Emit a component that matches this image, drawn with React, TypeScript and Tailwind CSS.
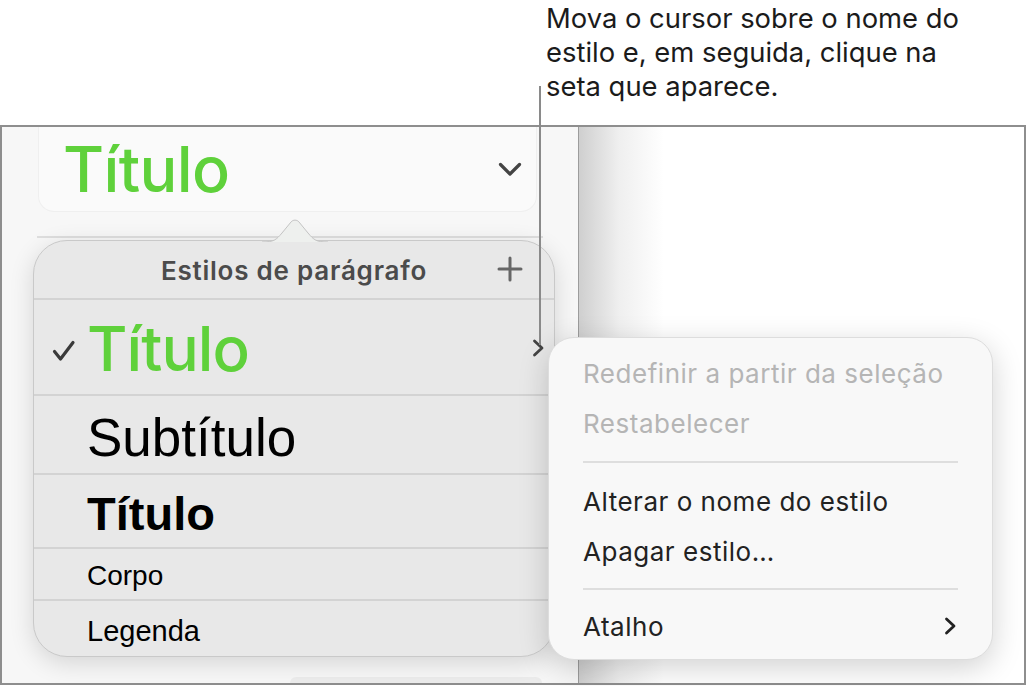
import React from 'react';

const GREEN = '#5fd13b';

function ChevronDown() {
    return (
        <svg width="24" height="15" viewBox="0 0 24 15" fill="none">
            <path d="M2.5 2.5 L12 12 L21.5 2.5" stroke="#444" strokeWidth="3.2" strokeLinecap="round" strokeLinejoin="round" />
        </svg>
    );
}

function ChevronRight({ color = '#444', w = 12, h = 18 }: { color?: string; w?: number; h?: number }) {
    return (
        <svg width={w} height={h} viewBox="0 0 12 18" fill="none">
            <path d="M2.5 2 L10 9 L2.5 16" stroke={color} strokeWidth="2.8" strokeLinecap="round" strokeLinejoin="round" />
        </svg>
    );
}

function Check() {
    return (
        <svg width="24" height="22" viewBox="0 0 24 22" fill="none">
            <path d="M2.5 11.5 L8.5 19 L21 2.5" stroke="#3a3a3a" strokeWidth="3.2" strokeLinecap="round" strokeLinejoin="round" />
        </svg>
    );
}

function Plus() {
    return (
        <svg width="26" height="26" viewBox="0 0 26 26" fill="none">
            <path d="M13 2 V24 M2 13 H24" stroke="#666" strokeWidth="3" strokeLinecap="round" />
        </svg>
    );
}

const STYLE_ROWS = [
    { label: 'Subtítulo', cls: 'h-[79px] text-[53px] font-normal pt-[6px]' },
    { label: 'Título', cls: 'h-[74px] text-[47px] font-bold pt-[4px]' },
    { label: 'Corpo', cls: 'h-[52px] text-[28px] font-normal pt-[4px]' },
    { label: 'Legenda', cls: 'h-[56px] text-[29px] font-normal pt-[4px]' },
];

export default function App() {
    return (
        <div className="relative w-[1027px] h-[686px] bg-white overflow-hidden font-['Inter',sans-serif]">
            {/* callout */}
            <div className="h-[125px] pl-[546px] pt-[1px] text-[27.4px] leading-[34px] text-[#1b1b1b]">
                Mova o cursor sobre o nome do
                <br />
                estilo e, em seguida, clique na
                <br />
                seta que aparece.
            </div>

            {/* window frame */}
            <div className="h-[560px] w-[1026px] border-2 border-[#8e8e8e] flex">
                <aside className="w-[577px] bg-[#f7f7f7] border-r border-[#9c9c9c] flex flex-col">
                    {/* current style button */}
                    <div className="ml-[36px] w-[499px] h-[86px] rounded-b-2xl bg-[#fafafa] border border-t-0 border-[#efefef] flex items-center justify-between pl-[24px] pr-[14px]">
                        <span className="text-[63px] leading-none font-medium tracking-[-0.01em]" style={{ color: GREEN }}>Título</span>
                        <ChevronDown />
                    </div>

                    <div className="mt-[24px] ml-[35px] w-[506px] h-[2px] bg-[#dedede]" />

                    {/* popover */}
                    <div className="relative mt-[2px] ml-[31px] w-[522px] h-[417px] rounded-[34px] bg-[#e8e8e8] border border-[#c9c9c9] shadow-[0_6px_24px_rgba(0,0,0,0.14)]">
                        <svg className="absolute left-[228px] top-[-23px]" width="66" height="25" viewBox="0 0 66 25" fill="none">
                            <path d="M0 24 C12 24 14 22 20 15 L29 4 C31 1.5 35 1.5 37 4 L46 15 C52 22 54 24 66 24" fill="#eef0ee" stroke="#c4c4c4" strokeWidth="1" />
                            <rect x="0" y="24" width="66" height="1" fill="#e8e8e8" />
                        </svg>

                        <div className="rounded-t-[34px] h-[59px] border-b-2 border-[#d3d3d3] relative flex items-center justify-center">
                            <span className="text-[26px] font-semibold text-[#4b4b4b] tracking-[0.03em] pt-[2px]">Estilos de parágrafo</span>
                            <div className="absolute right-[31px] top-[15px]">
                                <Plus />
                            </div>
                        </div>

                        <div className="h-[96px] border-b-2 border-[#d3d3d3] flex items-center pl-[18px] pr-[10px]">
                            <div className="w-[35px] pt-[8px]">
                                <Check />
                            </div>
                            <span className="text-[62px] leading-none font-medium tracking-[-0.015em] flex-1 pt-[4px]" style={{ color: GREEN }}>Título</span>
                            <div className="pt-[2px]">
                                <ChevronRight />
                            </div>
                        </div>

                        <div className="font-['Liberation_Sans',Arial,sans-serif] text-black">
                            {STYLE_ROWS.map((row, i) => (
                                <div
                                    key={row.label + i}
                                    className={`${row.cls} flex items-center pl-[53px] leading-none ${i < STYLE_ROWS.length - 1 ? 'border-b-2 border-[#d3d3d3]' : ''}`}
                                >
                                    {row.label}
                                </div>
                            ))}
                        </div>
                    </div>

                    <div className="mt-[20px] ml-[288px] w-[252px] h-[6px] rounded-t-lg bg-[#ececec]" />
                </aside>

                {/* document canvas */}
                <div className="flex-1 bg-[linear-gradient(to_right,#cfcfcf,#efefef_40px,#ffffff_85px)]" />
            </div>

            {/* leader line */}
            <div className="absolute left-[539px] top-[86px] w-[2px] h-[259px] bg-[#8a8a8a]" />

            {/* context menu */}
            <div className="absolute left-[548px] top-[337px] w-[445px] h-[323px] rounded-[26px] bg-[#f8f8f8] border border-[#dddddd] shadow-[0_8px_30px_rgba(0,0,0,0.18)] pt-[10px] text-[26px] tracking-[0.02em]">
                <div className="h-[50px] flex items-center px-[34px] text-[#b5b5b5]">Redefinir a partir da seleção</div>
                <div className="h-[50px] flex items-center px-[34px] text-[#b5b5b5]">Restabelecer</div>
                <div className="h-[28px] flex items-center px-[34px]">
                    <div className="h-[2px] w-full bg-[#dedede]" />
                </div>
                <div className="h-[50px] flex items-center px-[34px] text-[#222]">Alterar o nome do estilo</div>
                <div className="h-[50px] flex items-center px-[34px] text-[#222]">Apagar estilo…</div>
                <div className="h-[25px] flex items-center px-[34px]">
                    <div className="h-[2px] w-full bg-[#dedede]" />
                </div>
                <div className="h-[50px] flex items-center justify-between pl-[34px] pr-[36px] text-[#222]">
                    <span>Atalho</span>
                    <ChevronRight color="#222" />
                </div>
            </div>
        </div>
    );
}
